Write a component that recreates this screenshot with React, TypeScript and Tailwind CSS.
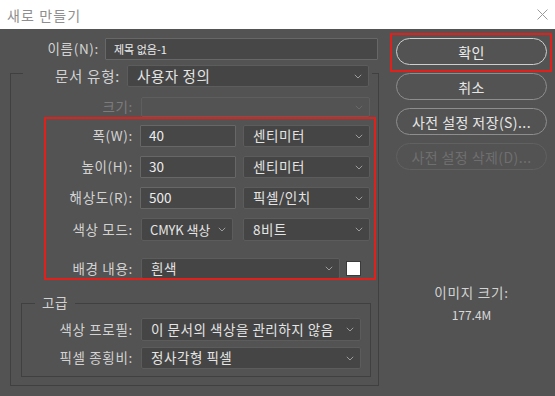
import React from 'react';

const Chev = ({ c = '#9c9c9c' }: { c?: string }) => (
  <svg width="8" height="5" viewBox="0 0 8 5" className="shrink-0">
    <polyline points="0.8,0.8 4,4 7.2,0.8" fill="none" stroke={c} strokeWidth="1" />
  </svg>
);

function Select({
  w,
  text,
  big,
  disabled,
  tight,
}: {
  w: string;
  text?: string;
  big?: boolean;
  disabled?: boolean;
  tight?: boolean;
}) {
  return (
    <div
      className={`${w} h-full flex items-center justify-between ${tight ? 'pl-[8px]' : 'pl-[9px]'} pr-[6px] rounded-[2px] border ${
        disabled ? 'bg-[#535353] border-[#5e5e5e]' : 'bg-[#454545] border-[#5c5c5c]'
      }`}
    >
      <span
        className={`${
          tight ? 'text-[13px] tracking-[-0.01em]' : big ? 'text-[14.5px] tracking-[0.04em]' : 'text-[13.5px] tracking-[0.04em]'
        } leading-none text-[#e4e4e4] whitespace-nowrap`}
      >
        {text}
      </span>
      <Chev c={disabled ? '#686868' : '#9c9c9c'} />
    </div>
  );
}

function Input({ w, text, small }: { w: string; text: string; small?: boolean }) {
  return (
    <div className={`${w} h-full flex items-center pl-[8px] bg-[#474747] border border-[#676767] rounded-[1px]`}>
      <span className={`${small ? 'text-[11px]' : 'text-[13.5px]'} leading-none text-[#ececec] whitespace-nowrap`}>{text}</span>
    </div>
  );
}

function Label({ w, text, dim, big }: { w: string; text: string; dim?: boolean; big?: boolean }) {
  return (
    <div
      className={`${w} shrink-0 text-right ${big ? 'text-[14.5px]' : 'text-[13.5px]'} tracking-[0.05em] leading-none whitespace-nowrap ${
        dim ? 'text-[#7c7c7c]' : 'text-[#d2d2d2]'
      }`}
    >
      {text}
    </div>
  );
}

function Btn({ text, primary, disabled }: { text: string; primary?: boolean; disabled?: boolean }) {
  return (
    <div
      className={`w-[151px] h-[27px] rounded-full flex items-center justify-center text-[14px] tracking-[0.03em] leading-none ${
        primary
          ? 'border-[1.5px] border-[#cfcfcf] text-[#ededed]'
          : disabled
          ? 'border border-[#616161] text-[#6f6f6f]'
          : 'border border-[#8e8e8e] text-[#e6e6e6]'
      }`}
    >
      {text}
    </div>
  );
}

export default function App() {
  return (
    <div className="w-[555px] h-[396px] flex flex-col relative overflow-hidden font-['Noto_Sans_CJK_KR',sans-serif]">
      {/* title bar */}
      <div className="h-[29px] shrink-0 bg-white flex items-center justify-between pl-[7px] pr-[7px]">
        <span className="text-[14px] tracking-[0.08em] leading-none text-[#8e8e8e]">새로 만들기</span>
        <svg width="11" height="11" viewBox="0 0 11 11">
          <path d="M0.5 0.5 L10.5 10.5 M10.5 0.5 L0.5 10.5" stroke="#9a9a9a" strokeWidth="1" />
        </svg>
      </div>

      {/* body */}
      <div className="flex-1 bg-[#535353] flex">
        {/* left column */}
        <div className="w-[382px] shrink-0 flex flex-col">
          {/* name */}
          <div className="mt-[9px] h-[22px] flex items-center">
            <Label w="w-[99px]" text="이름(N):" />
            <div className="ml-[6px] h-full flex">
              <Input w="w-[273px]" text="제목 없음-1" small />
            </div>
          </div>

          {/* outer group */}
          <div className="mt-[13px] ml-[10px] w-[369px] h-[313px] border border-[#404040] flex flex-col">
            {/* legend row */}
            <div className="-mt-[9px] ml-[12px] w-[349px] h-[22px] flex items-center bg-[#535353]">
              <Label w="w-[97px]" text="문서 유형:" big />
              <div className="ml-[7px] h-full flex">
                <Select w="w-[242px]" text="사용자 정의" big />
              </div>
            </div>

            {/* size (disabled) */}
            <div className="mt-[10px] h-[20px] flex items-center">
              <Label w="w-[122px]" text="크기:" dim />
              <div className="ml-[8px] h-full flex">
                <Select w="w-[229px]" disabled />
              </div>
            </div>

            {/* width */}
            <div className="mt-[8px] h-[22px] flex items-center">
              <Label w="w-[122px]" text="폭(W):" />
              <div className="ml-[7px] h-full flex">
                <Input w="w-[96px]" text="40" />
              </div>
              <div className="ml-[7px] h-full flex">
                <Select w="w-[127px]" text="센티미터" />
              </div>
            </div>

            {/* height */}
            <div className="mt-[9px] h-[22px] flex items-center">
              <Label w="w-[122px]" text="높이(H):" />
              <div className="ml-[7px] h-full flex">
                <Input w="w-[96px]" text="30" />
              </div>
              <div className="ml-[7px] h-full flex">
                <Select w="w-[127px]" text="센티미터" />
              </div>
            </div>

            {/* resolution */}
            <div className="mt-[9px] h-[22px] flex items-center">
              <Label w="w-[122px]" text="해상도(R):" />
              <div className="ml-[7px] h-full flex">
                <Input w="w-[96px]" text="500" />
              </div>
              <div className="ml-[7px] h-full flex">
                <Select w="w-[127px]" text="픽셀/인치" />
              </div>
            </div>

            {/* color mode */}
            <div className="mt-[9px] h-[23px] flex items-center">
              <Label w="w-[122px]" text="색상 모드:" />
              <div className="ml-[8px] h-full flex">
                <Select w="w-[92px]" text="CMYK 색상" tight />
              </div>
              <div className="ml-[10px] h-full flex">
                <Select w="w-[127px]" text="8비트" />
              </div>
            </div>

            {/* background */}
            <div className="mt-[17px] h-[21px] flex items-center">
              <Label w="w-[122px]" text="배경 내용:" />
              <div className="ml-[8px] h-full flex">
                <Select w="w-[199px]" text="흰색" />
              </div>
              <div className="ml-[6px] w-[15px] h-[15px] bg-white border border-[#3a3a3a]" />
            </div>

            {/* advanced group */}
            <div className="mt-[24px] ml-[10px] w-[350px] h-[74px] border border-[#404040] flex flex-col">
              <div className="-mt-[10px] ml-[13px] w-fit h-[18px] px-[7px] flex items-center bg-[#535353]">
                <span className="text-[13.5px] tracking-[0.05em] leading-none text-[#d2d2d2]">고급</span>
              </div>
              <div className="mt-[6px] h-[23px] flex items-center">
                <Label w="w-[111px]" text="색상 프로필:" />
                <div className="ml-[8px] h-full flex">
                  <Select w="w-[220px]" text="이 문서의 색상을 관리하지 않음" />
                </div>
              </div>
              <div className="mt-[6px] h-[22px] flex items-center">
                <Label w="w-[111px]" text="픽셀 종횡비:" />
                <div className="ml-[8px] h-full flex">
                  <Select w="w-[220px]" text="정사각형 픽셀" />
                </div>
              </div>
            </div>
          </div>
        </div>

        {/* right column */}
        <div className="flex-1 flex flex-col pl-[14px] pt-[9px]">
          <div className="flex flex-col gap-[8px]">
            <Btn text="확인" primary />
            <Btn text="취소" />
            <Btn text="사전 설정 저장(S)..." />
            <Btn text="사전 설정 삭제(D)..." disabled />
          </div>
          <div className="w-[151px] mt-[114px] flex flex-col items-center">
            <span className="h-[18px] flex items-center text-[13.5px] tracking-[0.06em] leading-none text-[#d2d2d2]">이미지 크기:</span>
            <span className="mt-[4px] h-[18px] flex items-center text-[12px] leading-none text-[#d8d8d8]">177.4M</span>
          </div>
        </div>
      </div>

      {/* annotation overlays */}
      <div className="absolute left-[44px] top-[117px] w-[332px] h-[163px] border-2 border-[#e1201c] pointer-events-none" />
      <div className="absolute left-[390px] top-[33px] w-[162px] h-[39px] border-2 border-[#e1201c] pointer-events-none" />
    </div>
  );
}
